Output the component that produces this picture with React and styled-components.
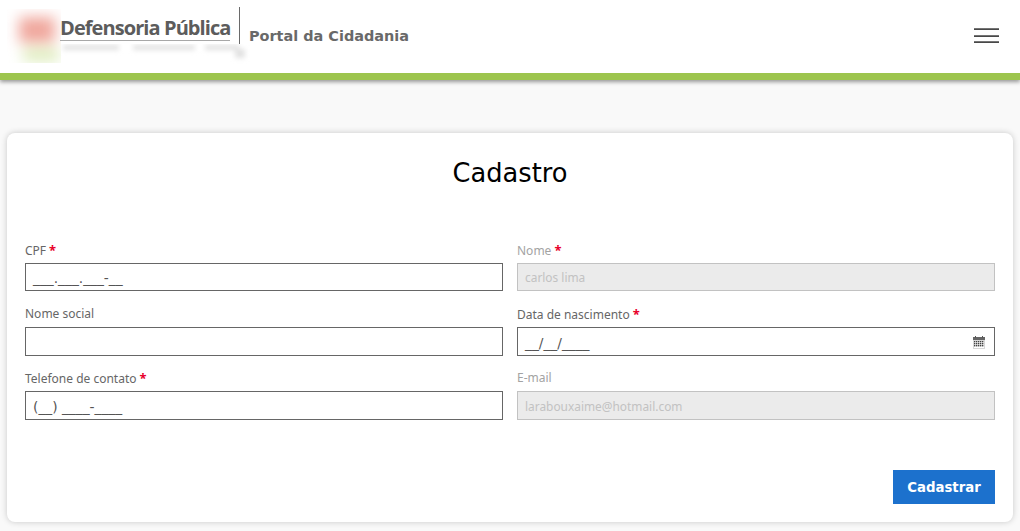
import styled, { createGlobalStyle } from 'styled-components';

const GlobalStyle = createGlobalStyle`
  html, body {
    margin: 0;
    padding: 0;
    background: #f9f9f9;
    font-family: "DejaVu Sans", sans-serif;
  }
`;

// header
const Head = styled.header`
  height: 73px;
  background: #fff;
  border-bottom: 7px solid #9dc54e;
  box-shadow: 0 2px 4px rgba(0, 0, 0, 0.4);
  display: flex;
  align-items: flex-start;
  justify-content: space-between;
  overflow: hidden;
`;

const Brand = styled.div`
  position: relative;
  display: flex;
  align-items: flex-start;
  padding-left: 7px;
`;

const LogoMark = styled.svg`
  width: 54px;
  height: 54px;
  margin: 9px -1px 0 0;
  flex: none;
`;

const LogoText = styled.div`
  width: 170px;
  margin: 15px 0 0 0;
  height: 25px;
  border-bottom: 1px solid #a8a8a8;
  font-family: "Open Sans", sans-serif;
  font-size: 20px;
  line-height: 25px;
  font-weight: 700;
  letter-spacing: -0.92px;
  color: #5c5c5c;
  white-space: nowrap;
`;

const Divider = styled.div`
  width: 1px;
  height: 37px;
  margin: 7px 9px 0 9px;
  background: #6a6a6a;
`;

const PortalName = styled.div`
  margin-top: 27px;
  font-size: 14.45px;
  line-height: 18px;
  font-weight: 700;
  color: #696969;
  white-space: nowrap;
`;

const BlurStrip = styled.svg`
  position: absolute;
  left: 61px;
  top: 44px;
  width: 190px;
  height: 20px;
`;

const MenuButton = styled.button`
  width: 25px;
  height: 15px;
  margin: 28px 21px 0 0;
  padding: 0;
  border: 0;
  background: transparent;
  display: flex;
  flex-direction: column;
  justify-content: space-between;
`;

const MenuLine = styled.span`
  display: block;
  height: 2px;
  background: linear-gradient(#8a8a8a, #333);
`;

// card
const Page = styled.main`
  padding: 53px 7px 9px;
`;

const Card = styled.section`
  height: 389px;
  box-sizing: border-box;
  padding: 23px 18px 18px;
  background: #fff;
  border-radius: 8px;
  box-shadow: 0 0 6px rgba(0, 0, 0, 0.2);
  display: flex;
  flex-direction: column;
`;

const Title = styled.h1`
  margin: 0 0 51px;
  font-size: 25.7px;
  line-height: 34px;
  font-weight: 400;
  text-align: center;
  color: #000;
`;

const FormGrid = styled.div`
  display: grid;
  grid-template-columns: 478px 478px;
  grid-auto-rows: 64px;
  column-gap: 14px;
`;

const Field = styled.div`
  display: flex;
  flex-direction: column;
`;

const Label = styled.label`
  height: 22px;
  font-family: "Noto Sans", sans-serif;
  font-size: 12px;
  line-height: 18px;
  color: ${(props) => (props.disabled ? '#a3a3a3' : '#666')};
`;

const Required = styled.span`
  margin-left: 3px;
  color: #e8002b;
  font-weight: 700;
  font-size: 13px;
`;

const InputBox = styled.div`
  height: ${(props) => props.height || 29}px;
  box-sizing: border-box;
  display: flex;
  align-items: center;
  justify-content: space-between;
  padding: ${(props) => (props.disabled ? '0' : '2px')} 9px 0 7px;
  border: 1px solid ${(props) => (props.disabled ? '#c2c2c2' : '#666')};
  background: ${(props) => (props.disabled ? '#ebebeb' : '#fff')};
  color: ${(props) => (props.disabled ? '#c2c2c2' : '#555')};
  font-family: ${(props) => (props.disabled ? '"Noto Sans", sans-serif' : '"DejaVu Sans", sans-serif')};
  font-size: ${(props) => (props.disabled ? '11.9px' : '13.8px')};
`;

const Footer = styled.div`
  margin-top: auto;
  display: flex;
  justify-content: flex-end;
`;

const SubmitButton = styled.button`
  width: 102px;
  height: 34px;
  border: 0;
  padding: 0;
  background: #1c71cd;
  color: #fff;
  font-family: "DejaVu Sans", sans-serif;
  font-size: 13.3px;
  font-weight: 700;
`;

const CalendarIcon = () => (
  <svg width="12" height="13" viewBox="0 0 12 13">
    <rect x="0" y="1" width="12" height="12" fill="#d8d8d8" />
    <rect x="0" y="1" width="12" height="3" fill="#666" />
    <rect x="1" y="5" width="10" height="7" fill="#fff" />
    {[1, 3, 5, 7, 9].map((x) =>
      [5, 7, 9].map((y) => <rect key={`${x}-${y}`} x={x} y={y} width="1.4" height="1.4" fill="#444" />)
    )}
    <rect x="2" y="0" width="1" height="2" fill="#555" />
    <rect x="9" y="0" width="1" height="2" fill="#555" />
  </svg>
);

const App = () => (
  <>
    <GlobalStyle />
    <Head>
      <Brand>
        <LogoMark viewBox="0 0 54 54">
          <defs>
            <filter id="logoBlur" x="-50%" y="-50%" width="200%" height="200%">
              <feGaussianBlur stdDeviation="7" />
            </filter>
            <clipPath id="logoClip">
              <rect width="54" height="54" />
            </clipPath>
          </defs>
          <g clipPath="url(#logoClip)">
            <g filter="url(#logoBlur)">
              <rect x="12" y="8" width="36" height="26" fill="#f0a89e" />
              <rect x="16" y="40" width="36" height="12" fill="#dcebb8" />
            </g>
          </g>
        </LogoMark>
        <LogoText>Defensoria Pública</LogoText>
        <Divider />
        <PortalName>Portal da Cidadania</PortalName>
        <BlurStrip viewBox="0 0 190 20">
          <defs>
            <filter id="stripBlur" x="-10%" y="-100%" width="120%" height="300%">
              <feGaussianBlur stdDeviation="2.5" />
            </filter>
          </defs>
          <rect width="190" height="20" fill="#fff" />
          <g filter="url(#stripBlur)" fill="#e2e2e2">
            <rect x="2" y="1" width="56" height="5" />
            <rect x="72" y="1" width="62" height="5" />
            <rect x="144" y="1" width="34" height="5" />
            <rect x="174" y="5" width="10" height="9" />
          </g>
        </BlurStrip>
      </Brand>
      <MenuButton aria-label="Menu">
        <MenuLine />
        <MenuLine />
        <MenuLine />
      </MenuButton>
    </Head>
    <Page>
      <Card>
        <Title>Cadastro</Title>
        <FormGrid>
          <Field>
            <Label>CPF<Required>*</Required></Label>
            <InputBox height={28}>___.___.___-__</InputBox>
          </Field>
          <Field>
            <Label disabled>Nome<Required>*</Required></Label>
            <InputBox height={28} disabled>carlos lima</InputBox>
          </Field>
          <Field>
            <Label>Nome social</Label>
            <InputBox />
          </Field>
          <Field>
            <Label>Data de nascimento<Required>*</Required></Label>
            <InputBox>__/__/____<CalendarIcon /></InputBox>
          </Field>
          <Field>
            <Label>Telefone de contato<Required>*</Required></Label>
            <InputBox>(__) ____-____</InputBox>
          </Field>
          <Field>
            <Label disabled>E-mail</Label>
            <InputBox disabled>larabouxaime@hotmail.com</InputBox>
          </Field>
        </FormGrid>
        <Footer>
          <SubmitButton>Cadastrar</SubmitButton>
        </Footer>
      </Card>
    </Page>
  </>
);

export default App;
